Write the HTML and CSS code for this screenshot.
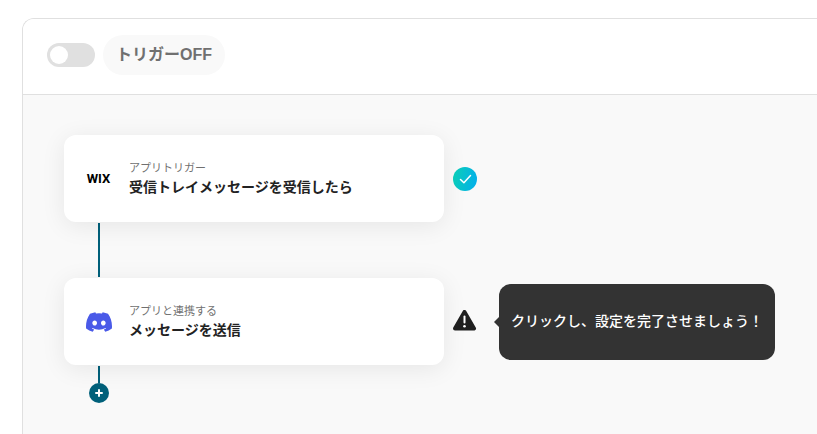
FILE: index.html
```html
<!doctype html>
<html lang="ja">

<head>
    <meta charset="UTF-8">
    <meta name="viewport" content="width=device-width, initial-scale=1.0">
    <title>トリガー</title>
    <link rel="stylesheet" href="styles.css">
</head>

<body>
    <main class="panel">
        <header class="panel-header">
            <input type="checkbox" id="trigger" class="switch" role="switch">
            <label for="trigger" class="switch-label">トリガーOFF</label>
        </header>

        <div class="flow">
            <div class="step">
                <button type="button" class="card">
                    <span class="app-icon wix">WIX</span>
                    <span class="card-text">
                        <span class="card-type">アプリトリガー</span>
                        <span class="card-title">受信トレイメッセージを受信したら</span>
                    </span>
                </button>
                <svg class="status" viewBox="0 0 24 24" role="img" aria-label="完了">
                    <defs>
                        <linearGradient id="done" x1="0" y1="0.4" x2="1" y2="0.6">
                            <stop offset="0" stop-color="#0acdb8" />
                            <stop offset="1" stop-color="#04b0ea" />
                        </linearGradient>
                    </defs>
                    <circle cx="12" cy="12" r="12" fill="url(#done)" />
                    <path d="M7.5 12.5l3.4 3.3 6.6-7.2" fill="none" stroke="#fff" stroke-width="1.5" stroke-linecap="round" stroke-linejoin="round" />
                </svg>
            </div>

            <div class="line"></div>

            <div class="step">
                <button type="button" class="card">
                    <span class="app-icon">
                        <svg class="discord" viewBox="0 0 127.14 96.36" aria-hidden="true">
                            <path fill="#4a5ae8" d="M107.7 8.07A105.15 105.15 0 0 0 81.47 0a72.06 72.06 0 0 0-3.36 6.83 97.68 97.68 0 0 0-29.11 0A72.37 72.37 0 0 0 45.64 0a105.89 105.89 0 0 0-26.25 8.09C2.79 32.65-1.71 56.6.54 80.21a105.73 105.73 0 0 0 32.17 16.15 77.7 77.7 0 0 0 6.89-11.11 68.42 68.42 0 0 1-10.85-5.18c.91-.66 1.8-1.34 2.66-2a75.57 75.57 0 0 0 64.32 0c.87.71 1.76 1.39 2.66 2a68.68 68.68 0 0 1-10.87 5.19 77 77 0 0 0 6.89 11.1 105.25 105.25 0 0 0 32.19-16.14c2.64-27.38-4.51-51.11-18.9-72.15zM42.45 65.69C36.18 65.69 31 60 31 53s5-12.74 11.43-12.74S54 46 53.89 53s-5.05 12.69-11.44 12.69zm42.24 0C78.41 65.69 73.25 60 73.25 53s5-12.74 11.44-12.74S96.23 46 96.12 53s-5.04 12.69-11.43 12.69z" />
                        </svg>
                    </span>
                    <span class="card-text">
                        <span class="card-type">アプリと連携する</span>
                        <span class="card-title">メッセージを送信</span>
                    </span>
                </button>
                <svg class="status" viewBox="0 0 24 24" role="img" aria-label="未設定">
                    <path d="M11.5 2L21 18.500H2z" fill="#1f1f1f" stroke="#1f1f1f" stroke-width="4" stroke-linejoin="round" />
                    <path d="M11.5 6.500v6" stroke="#fff" stroke-width="2" stroke-linecap="round" />
                    <circle cx="11.5" cy="16.200" r="1.300" fill="#fff" />
                </svg>
                <div class="tooltip" role="tooltip">クリックし、設定を完了させましょう！</div>
            </div>

            <div class="line line-short"></div>
            <button type="button" class="add" aria-label="追加">
                <svg viewBox="0 0 20 20" aria-hidden="true">
                    <path d="M10 7v6M7 10h6" stroke="#fff" stroke-width="2" stroke-linecap="round" />
                </svg>
            </button>
        </div>
    </main>
</body>

</html>
```
FILE: styles.css
```css
* {
    box-sizing: border-box;
}

body {
    margin: 0;
    padding: 18px 0 0 22px;
    background: #fff;
    color: #222;
    font-family: "Liberation Sans", "Noto Sans CJK JP", sans-serif;
    overflow: hidden;
}

button {
    border: 0;
    padding: 0;
    font-family: inherit;
    color: inherit;
    cursor: pointer;
}

.panel {
    display: flex;
    flex-direction: column;
    min-height: calc(100vh - 18px);
    border: 1px solid #e0e0e0;
    border-width: 1px 0 0 1px;
    border-radius: 12px 0 0 0;
    background: #f9f9f9;
    overflow: hidden;
}

.panel-header {
    display: flex;
    align-items: center;
    gap: 8px;
    padding: 16px 24px 19px;
    border-bottom: 1px solid #e0e0e0;
    background: #fff;
}

.switch {
    appearance: none;
    display: flex;
    align-items: center;
    width: 48px;
    height: 24px;
    margin: 0;
    padding: 3px;
    border-radius: 12px;
    background: #e0e0e0;
    cursor: pointer;
}

.switch::before {
    content: "";
    width: 18px;
    height: 18px;
    border-radius: 50%;
    background: #fff;
}

.switch:checked {
    justify-content: flex-end;
    background: #04b0ea;
}

.switch-label {
    padding: 0 13px;
    border-radius: 20px;
    background: #f9f9f9;
    color: #707070;
    font-size: 16px;
    font-weight: bold;
    line-height: 40px;
}

.flow {
    flex: 1;
    padding: 40px 41px 30px;
}

.step {
    display: flex;
    align-items: center;
}

.card {
    display: flex;
    align-items: center;
    gap: 16px;
    width: 380px;
    height: 87px;
    padding: 0 20px;
    border-radius: 12px;
    background: #fff;
    box-shadow: 0 4px 24px rgba(0, 0, 0, 0.08);
    text-align: left;
}

.app-icon {
    display: flex;
    align-items: center;
    justify-content: center;
    width: 29px;
}

.wix {
    color: #000;
    font-family: Roboto, sans-serif;
    font-size: 13px;
    font-weight: bold;
}

.discord {
    width: 26px;
    height: 20px;
}

.card-text {
    display: flex;
    flex-direction: column;
    padding-bottom: 2px;
}

.card-type {
    color: #707070;
    font-size: 11px;
    line-height: 18px;
}

.card-title {
    font-size: 14px;
    font-weight: bold;
    line-height: 20px;
}

.status {
    flex: none;
    width: 24px;
    height: 24px;
    margin-left: 9px;
}

.line {
    width: 2px;
    height: 54px;
    margin: 1px 34px;
    background: #00607a;
}

.line-short {
    height: 17px;
    margin-bottom: 0;
}

.add {
    display: block;
    width: 20px;
    height: 20px;
    margin-left: 25px;
    border-radius: 50%;
    background: #00607a;
}

.add svg {
    display: block;
}

.tooltip {
    position: relative;
    margin-left: 22px;
    padding: 27px 12px 29px;
    border-radius: 12px;
    background: #333;
    color: #fff;
    font-size: 14px;
    font-weight: 500;
    line-height: 20px;
    white-space: nowrap;
}

.tooltip::before {
    content: "";
    position: absolute;
    top: 50%;
    right: 100%;
    border: 5px solid transparent;
    border-left: 0;
    border-right-color: #333;
    transform: translateY(-50%);
}
```
